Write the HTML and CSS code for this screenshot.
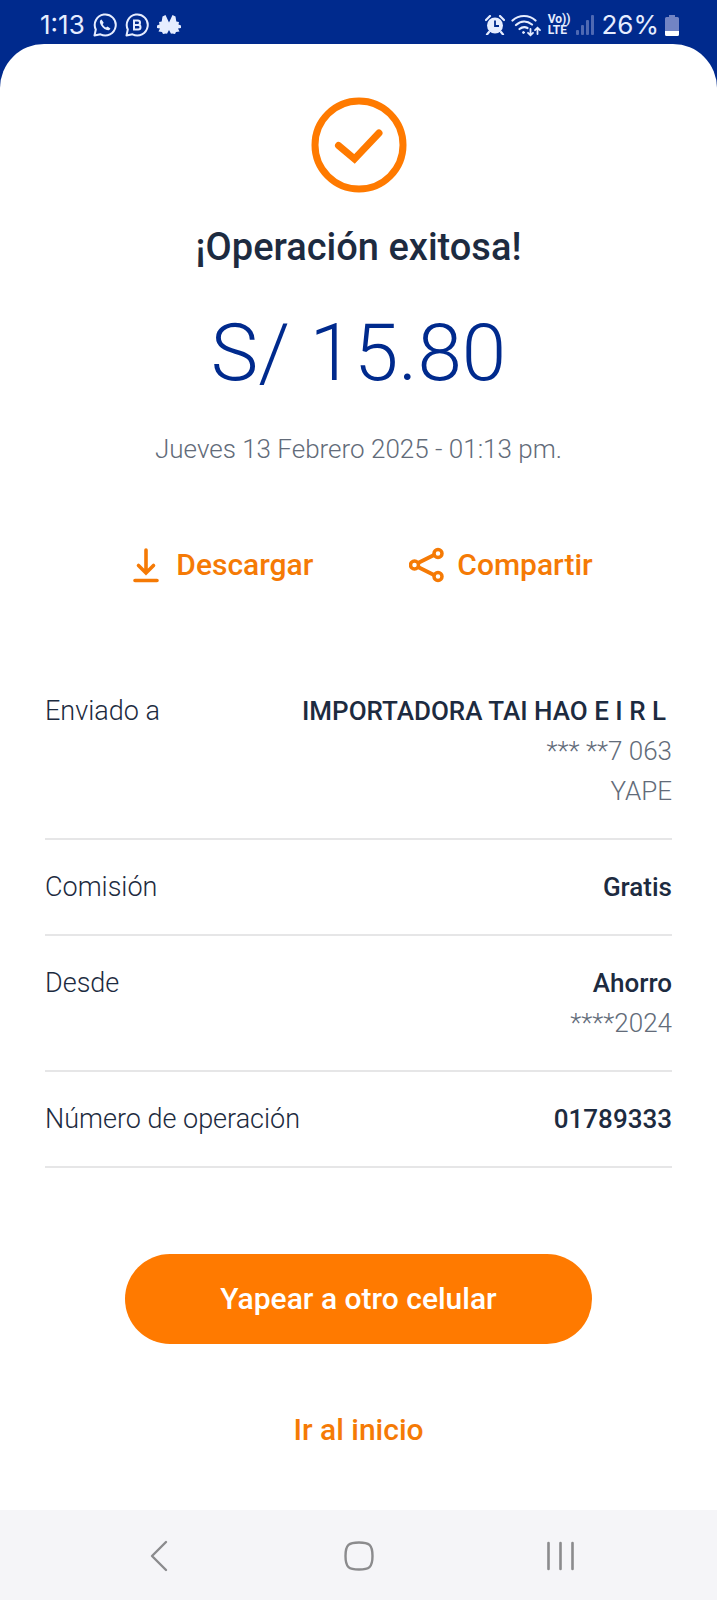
FILE: index.html
```
<!DOCTYPE html>
<html lang="es">
<head>
<meta charset="utf-8">
<meta name="viewport" content="width=device-width, initial-scale=1">
<title>Operación exitosa</title>
<link rel="stylesheet" href="styles.css">
</head>
<body>
<header class="status">
  <div class="status-group status-left">
    <span class="status-text">1:13</span>
    <svg class="icon" width="24" height="24" viewBox="0 0 24 24" fill="none" stroke="#e6edff" stroke-width="2"><path d="M1.500 22.500l1.300-6A10.500 10.500 0 1 1 7.500 21.300z" stroke-linejoin="round"/><path d="M8.500 6.500c-1.500.6-2 2-1.500 3.600 1 3.200 3.500 5.900 6.800 7 1.800.5 3.200-.2 3.600-1.700l-2.900-1.900-1.500 1.100c-1.500-.7-2.600-1.900-3.300-3.300l1-1.500z" fill="#e6edff" stroke="none"/></svg>
    <svg class="icon" width="24" height="24" viewBox="0 0 24 24" fill="none" stroke="#e6edff" stroke-width="2"><path d="M1.500 22.500l1.300-6A10.500 10.500 0 1 1 7.500 21.300z" stroke-linejoin="round"/><path d="M9 7.500h3.800a2.200 2.200 0 0 1 0 4.400H9h4.200a2.300 2.300 0 0 1 0 4.600H9z"/></svg>
    <svg class="icon" width="24" height="20" viewBox="0 0 24 20" fill="#e6edff"><path d="M5.500 1.500L8.500 0 12 7.500 15.500 0l3 1.500.8 5 2.700.5-.5 2.500 2.500 1v2.500l-3 .5 1.500 3-3.500.5-1 2-3-.5-1 .3-2-3.800-2 3.800-1-.3-3 .5-1-2-3.500-.5 1.500-3-3-.5v-2.500l2.500-1L2 7l2.700-.5z"/></svg>
  </div>
  <div class="status-group status-right">
    <svg class="icon" width="20" height="20" viewBox="0 0 20 20"><circle cx="10" cy="10.500" r="8" fill="#e6edff"/><path d="M1 5l4-4M19 5l-4-4M4 17l-2 2.500M16 17l2 2.500" stroke="#e6edff" stroke-width="2.200" stroke-linecap="round"/><path d="M10 5.500V11h4" fill="none" stroke="#002a8d" stroke-width="1.800"/></svg>
    <svg class="icon" width="31" height="23" viewBox="0 0 31 23" fill="none" stroke="#e6edff" stroke-width="2.200" stroke-linecap="round"><path d="M1.500 6.500C8 .5 18 .5 24.500 6.500M5 11c5-4.500 11-4.500 16-.500M8.500 15c3-2.500 5.500-2.500 8-1"/><circle cx="12.500" cy="18.500" r="1" fill="#e6edff" stroke-width="1"/><path d="M19.500 15v6m-2.500-2.200l2.500 2.500 2.500-2.500M26.500 20v-6m-2.500 2.200l2.500-2.500 2.500 2.500" stroke-width="1.800"/></svg>
    <span class="lte"><span>Vo))</span><span>LTE</span></span>
    <svg class="icon" width="19" height="20" viewBox="0 0 19 20" fill="#4f69b3"><rect x="0" y="15" width="3" height="5" rx="1"/><rect x="5" y="10" width="3" height="10" rx="1"/><rect x="10" y="5" width="3" height="15" rx="1"/><rect x="15" y="0" width="3" height="20" rx="1"/></svg>
    <span class="status-text">26%</span>
    <svg class="icon" width="14" height="21" viewBox="0 0 14 21"><path d="M4 0h6v2h2.500A1.500 1.500 0 0 1 14 3.500V16H0V3.500A1.500 1.500 0 0 1 1.500 2H4z" fill="#7284c4"/><path d="M0 16h14v3.500a1.500 1.500 0 0 1-1.500 1.500h-11A1.500 1.500 0 0 1 0 19.500z" fill="#fff"/></svg>
  </div>
</header>
<main class="sheet">
  <svg class="check" width="96" height="96" viewBox="0 0 96 96" fill="none" stroke="#ff7a00"><circle cx="48" cy="48" r="44" stroke-width="7"/><path d="M27.500 48.500l16 13.500L68 36" stroke-width="7" stroke-linecap="round"/></svg>
  <h1 class="title">¡Operación exitosa!</h1>
  <p class="amount">S/ 15.80</p>
  <p class="date">Jueves 13 Febrero 2025 - 01:13 pm.</p>
  <div class="actions">
    <button class="action" type="button">
      <svg class="icon" width="28" height="36" viewBox="0 0 28 36" fill="none" stroke="#f57a05" stroke-width="3.600" stroke-linecap="round"><path d="M14 3v23M6.500 18.500l7.500 7.500 7.500-7.500M3 33.500h22"/></svg>
      <span>Descargar</span>
    </button>
    <button class="action share" type="button">
      <svg class="icon" width="36" height="36" viewBox="0 0 36 36" fill="none" stroke="#f57a05" stroke-width="3.500"><path d="M9 16L25 8M9 20l16 8" stroke-width="4"/><circle cx="5.500" cy="18" r="4"/><circle cx="29" cy="6.500" r="4"/><circle cx="29" cy="29.500" r="4"/></svg>
      <span>Compartir</span>
    </button>
  </div>
  <dl class="details">
    <div class="row first">
      <dt>Enviado a</dt>
      <dd><span class="strong name">IMPORTADORA TAI HAO E I R L</span><span>*** **7 063</span><span>YAPE</span></dd>
    </div>
    <div class="row">
      <dt>Comisión</dt>
      <dd><span class="strong">Gratis</span></dd>
    </div>
    <div class="row">
      <dt>Desde</dt>
      <dd><span class="strong">Ahorro</span><span>****2024</span></dd>
    </div>
    <div class="row">
      <dt>Número de operación</dt>
      <dd><span class="strong">01789333</span></dd>
    </div>
  </dl>
  <button class="primary" type="button">Yapear a otro celular</button>
  <a class="home" href="#">Ir al inicio</a>
</main>
<nav class="navbar" aria-label="Sistema">
  <button class="nav-btn" type="button" aria-label="Atrás"><svg width="32" height="32" viewBox="0 0 32 32" fill="none" stroke="#8b8b8d" stroke-width="2.400" stroke-linecap="round" stroke-linejoin="round"><path d="M25 2L11 16l14 14"/></svg></button>
  <button class="nav-btn" type="button" aria-label="Inicio"><svg width="32" height="32" viewBox="0 0 32 32" fill="none" stroke="#8b8b8d" stroke-width="2.400"><path d="M16 2.500c10 0 13.500 2 13.500 13.500S26 29.500 16 29.500 2.500 27.500 2.500 16 6 2.500 16 2.500z"/></svg></button>
  <button class="nav-btn" type="button" aria-label="Recientes"><svg width="32" height="32" viewBox="0 0 32 32" fill="none" stroke="#8b8b8d" stroke-width="2.600" stroke-linecap="round"><path d="M4.500 3v26M16.500 3v26M28.500 3v26"/></svg></button>
</nav>
</body>
</html>
```
FILE: styles.css
```
* {
  box-sizing: border-box;
}

body {
  margin: 0;
  min-height: 100vh;
  display: flex;
  flex-direction: column;
  background: #002a8d;
  color: #1d2b40;
  font-family: Roboto, "Noto Sans", sans-serif;
}

button {
  border: 0;
  background: none;
  padding: 0;
  font: inherit;
  cursor: pointer;
}

.icon,
.check {
  display: block;
  flex: none;
}

.status {
  display: flex;
  justify-content: space-between;
  height: 44px;
  padding: 6px 38px 0 40px;
  color: #e6edff;
}

.status-group {
  display: flex;
  align-items: center;
}

.status-left {
  gap: 8px;
}

.status-right {
  gap: 6px;
}

.status-text {
  font-family: Inter, Roboto, sans-serif;
  font-size: 26px;
  line-height: 38px;
}

.lte {
  display: flex;
  flex-direction: column;
  font-size: 12px;
  line-height: 11px;
  font-weight: 700;
}

.sheet {
  flex: 1;
  display: flex;
  flex-direction: column;
  align-items: center;
  padding: 53px 45px 40px;
  border-radius: 44px 44px 0 0;
  background: #fff;
}

.title {
  margin: 30px 0 0;
  font-size: 38px;
  line-height: 48px;
  font-weight: 500;
}

.amount {
  margin: 34px 0 0;
  font-size: 80px;
  line-height: 96px;
  font-weight: 300;
  color: #002a8d;
}

.date {
  margin: 28px 0 0;
  font-size: 26px;
  line-height: 40px;
  font-weight: 300;
  color: #626b79;
}

.actions {
  display: flex;
  gap: 96px;
  margin-top: 76px;
  padding-left: 8px;
}

.action {
  display: flex;
  align-items: center;
  gap: 16px;
  font-size: 30px;
  line-height: 40px;
  font-weight: 500;
  color: #f57a05;
}

.share {
  gap: 12px;
}

.details {
  align-self: stretch;
  margin: 106px 0 0;
}

.row {
  display: flex;
  justify-content: space-between;
  gap: 16px;
  padding: 27px 0;
  border-bottom: 2px solid #e6e6e7;
  font-size: 26px;
  line-height: 40px;
  font-weight: 300;
}

.first {
  padding: 0 0 27px;
}

dt {
  font-size: 27px;
}

dd {
  display: flex;
  flex-direction: column;
  margin: 0;
  text-align: right;
  color: #626b79;
}

.strong {
  font-weight: 500;
  color: #1d2b40;
}

.name {
  padding-right: 6px;
}

.primary {
  width: 100%;
  max-width: 467px;
  margin-top: 86px;
  padding: 25px;
  border-radius: 45px;
  background: #ff7a00;
  color: #fff;
  font-size: 30px;
  line-height: 40px;
  font-weight: 500;
}

.home {
  margin-top: 66px;
  color: #f57a05;
  font-size: 30px;
  line-height: 40px;
  font-weight: 500;
  text-decoration: none;
}

.navbar {
  display: flex;
  justify-content: space-between;
  padding: 0 141px;
  background: #f5f5f8;
}

.nav-btn {
  display: flex;
  align-items: center;
  height: 90px;
  padding-top: 2px;
}
```
